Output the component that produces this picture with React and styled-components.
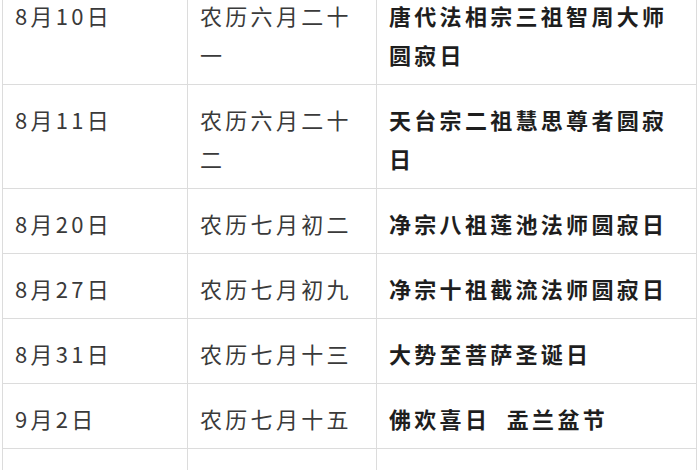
import React from 'react';
import styled, { createGlobalStyle } from 'styled-components';

const GlobalStyle = createGlobalStyle`
    html, body {
        margin: 0;
        padding: 0;
        background: #fff;
        overflow: hidden;
    }
    body {
        font-family: "Noto Sans CJK SC", "Liberation Sans", sans-serif;
    }
`;

// data of the festival table
const rows = [
    { date: '8月10日', lunar: '农历六月二十一', event: '唐代法相宗三祖智周大师圆寂日' },
    { date: '8月11日', lunar: '农历六月二十二', event: '天台宗二祖慧思尊者圆寂日' },
    { date: '8月20日', lunar: '农历七月初二', event: '净宗八祖莲池法师圆寂日' },
    { date: '8月27日', lunar: '农历七月初九', event: '净宗十祖截流法师圆寂日' },
    { date: '8月31日', lunar: '农历七月十三', event: '大势至菩萨圣诞日' },
    { date: '9月2日', lunar: '农历七月十五', event: '佛欢喜日\u00a0 盂兰盆节' },
    { date: '9月3日', lunar: '农历七月十六', event: '净宗十二祖彻悟大师圆寂日' }
];

const Page = styled.div`
    width: 700px;
    height: 470px;
    overflow: hidden;
`;

const Table = styled.table`
    margin: -20px 0 0 2px;
    width: 695px;
    border-collapse: collapse;
    table-layout: fixed;
`;

const Cell = styled.td`
    border: 1px solid #dcdcdc;
    padding: 15px 10px 10px 12px;
    vertical-align: top;
    font-size: 22px;
    letter-spacing: 3.3px;
    line-height: 39px;
    color: ${props => props.bold ? '#1e1e1e' : '#3a3a3a'};
    font-weight: ${props => props.bold ? 700 : 400};
    word-break: break-all;
`;

export default function App() {
    return (
        <Page>
            <GlobalStyle />
            <Table>
                <colgroup>
                    <col style={{ width: '185px' }} />
                    <col style={{ width: '189px' }} />
                    <col />
                </colgroup>
                <tbody>
                    {rows.map((r) => (
                        <tr key={r.date}>
                            <Cell>{r.date}</Cell>
                            <Cell>{r.lunar}</Cell>
                            <Cell bold>{r.event}</Cell>
                        </tr>
                    ))}
                </tbody>
            </Table>
        </Page>
    );
}
